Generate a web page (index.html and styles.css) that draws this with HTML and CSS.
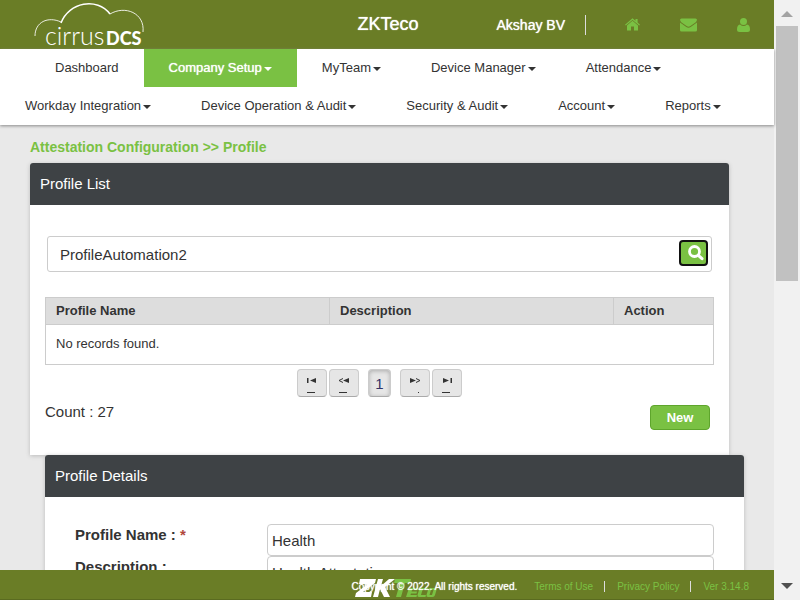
FILE: index.html
```html
<!DOCTYPE html>
<html lang="en">
<head>
<meta charset="utf-8">
<title>Attestation Configuration</title>
<link rel="stylesheet" href="styles.css">
</head>
<body>
<div class="page">
  <header class="top">
    <a class="logo" href="#" aria-label="cirrusDCS">
      <svg width="112" height="49" viewBox="0 0 112 49">
        <g fill="none" stroke="#fff">
          <path d="M1 36C1 22 14 16 27 22" stroke-width="1" opacity=".85"/>
          <path d="M27 23C35 2 63 -3 76 14" stroke-width="1.5"/>
          <path d="M76 14C91 5 111 13 109 32" stroke-width="1" opacity=".85"/>
        </g>
        <text x="11" y="45" class="logo-thin">cirrus</text>
        <text x="72" y="45" class="logo-bold">DCS</text>
      </svg>
    </a>
    <span class="company">ZKTeco</span>
    <span class="user">Akshay BV</span>
    <nav class="icons">
      <a href="#" aria-label="Home"><svg width="15" height="13" viewBox="0 0 15 13"><path d="M7.500 2.800L13 7.400V12.500H9V8.500H6V12.500H2V7.400Z"/><path d="M0 6.700L7.500 .3L10.500 2.800V1H12.600V4.600L15 6.700L14.200 7.500L7.500 1.900L.8 7.500Z"/></svg></a>
      <a href="#" aria-label="Mail"><svg width="17" height="14" viewBox="0 0 17 14"><path d="M1.500 .5H15.500Q17 .5 17 2Q16.500 4 14 5.500L10 8.300Q8.500 9.200 7 8.300L3 5.500Q.5 4 0 2Q0 .5 1.500 .5Z"/><path d="M0 4.500L6.300 9Q8.500 10.500 10.700 9L17 4.500V12Q17 13.500 15.500 13.500H1.500Q0 13.500 0 12Z"/></svg></a>
      <a href="#" aria-label="Account"><svg width="13" height="14" viewBox="0 0 13 14"><circle cx="6.500" cy="3.500" r="3.500"/><path d="M3 6.500Q6.500 9.500 10 6.500Q13 7 13 11.500Q13 14 10.500 14H2.500Q0 14 0 11.500Q0 7 3 6.500Z"/></svg></a>
    </nav>
  </header>
  <nav class="menu">
    <div class="menu-row first">
      <a href="#">Dashboard</a>
      <a href="#" class="active drop">Company Setup</a>
      <a href="#" class="drop">MyTeam</a>
      <a href="#" class="drop">Device Manager</a>
      <a href="#" class="drop">Attendance</a>
    </div>
    <div class="menu-row">
      <a href="#" class="drop">Workday Integration</a>
      <a href="#" class="drop">Device Operation &amp; Audit</a>
      <a href="#" class="drop">Security &amp; Audit</a>
      <a href="#" class="drop">Account</a>
      <a href="#" class="drop">Reports</a>
    </div>
  </nav>
  <main>
    <h1>Attestation Configuration &gt;&gt; Profile</h1>
    <section class="panel">
      <h2>Profile List</h2>
      <div class="list">
        <form class="search">
          <input type="text" aria-label="Search profiles" value="ProfileAutomation2">
          <button type="button" aria-label="Search"><svg width="16" height="16" viewBox="0 0 16 16"><circle cx="6.500" cy="6.500" r="5" fill="none" stroke="#fff" stroke-width="2.800"/><path d="M10.300 10.300L14 13.700" stroke="#fff" stroke-width="3" stroke-linecap="round"/></svg></button>
        </form>
        <table>
          <thead><tr><th class="wide">Profile Name</th><th class="wide">Description</th><th>Action</th></tr></thead>
          <tbody><tr><td colspan="3">No records found.</td></tr></tbody>
        </table>
        <div class="pager">
          <button type="button" aria-label="First page"><svg width="12" height="20" viewBox="0 0 12 20"><path d="M1 4H2.500V9H1ZM10 4V9L4 6.500ZM1 18H9V19H1Z"/></svg></button>
          <button type="button" aria-label="Previous page"><svg width="12" height="20" viewBox="0 0 12 20"><path d="M11 4V9L5 6.500ZM1 18H9V19H1Z"/><path d="M5 4.500L1 6.500L5 8.500" fill="none" stroke="#333"/></svg></button>
          <button type="button" class="current">1</button>
          <button type="button" aria-label="Next page"><svg width="12" height="20" viewBox="0 0 12 20"><path d="M1 4V9L7 6.500ZM9 18H10V19H9Z"/><path d="M7 4.500L11 6.500L7 8.500" fill="none" stroke="#333"/></svg></button>
          <button type="button" aria-label="Last page"><svg width="12" height="20" viewBox="0 0 12 20"><path d="M2 4V9L8 6.500ZM9.500 4H11V9H9.500ZM1 18H9V19H1Z"/></svg></button>
        </div>
        <div class="summary"><span>Count : 27</span><button type="button" class="new">New</button></div>
      </div>
    </section>
    <section class="panel details">
      <h2>Profile Details</h2>
      <form class="fields">
        <label for="name">Profile Name : <span class="required">*</span></label>
        <input id="name" type="text" value="Health">
        <label for="desc">Description :</label>
        <input id="desc" type="text" value="Health Attestation">
      </form>
    </section>
  </main>
  <footer>
    <svg class="brand" width="82" height="20" viewBox="0 0 82 20" aria-label="ZKTeco">
      <path fill="#fff" d="M5 1H21L20 5L8 14H17L16 19H0L1 15L13 6H4ZM23 1H28L26 8L34 1H40L30 9L35 19H29L25 11L23 19H18Z"/>
      <path fill="#7ac143" d="M40 1H56L55 5H50L46 19H41L45 5H39ZM54 10H64L63 12H57L56.500 13.500H62L61.500 15.500H56L55.500 17H62L61.500 19H51ZM66 10H73L72.500 12H67.500L66 17H71L70.500 19H64Q62 19 62.500 17L64 12Q64.500 10 66 10ZM75 10H80Q82 10 81.500 12L80 17Q79.500 19 77.500 19H73Q71 19 71.500 17L73 12Q73.500 10 75 10ZM76 12L74.500 17H77L78.500 12Z"/>
    </svg>
    <span class="copy">Copyright © 2022. All rights reserved.</span>
    <a href="#">Terms of Use</a>
    <a href="#">Privacy Policy</a>
    <a href="#">Ver 3.14.8</a>
  </footer>
</div>
<div class="scrollbar" aria-hidden="true"><i class="up"></i><i class="thumb"></i><i class="down"></i></div>
</body>
</html>
```
FILE: styles.css
```css
* { box-sizing: border-box; }
body {
  margin: 0;
  height: 100vh;
  display: flex;
  overflow: hidden;
  font-family: "Liberation Sans", Arial, sans-serif;
  font-size: 15px;
  color: #333;
  background: #e9e9e9;
}
a { text-decoration: none; }
button, input { font: inherit; color: inherit; margin: 0; }
svg { display: block; }

.page { flex: 1; min-width: 0; display: flex; flex-direction: column; }

.top {
  flex: none;
  height: 49px;
  padding: 0 24px 0 34px;
  display: grid;
  grid-template-columns: 112px 1fr auto auto;
  align-items: center;
  background: #6a7d26;
  color: #fff;
}
.logo-thin { font: 300 25px Lato, sans-serif; fill: #fff; }
.logo-bold { font: 900 18px Lato, sans-serif; fill: #fff; }
.company { font-size: 18px; text-align: right; padding-right: 78px; }
.user { padding-right: 20px; font-size: 14px; text-shadow: 0 0 1px #fff; }
.company { text-shadow: 0 0 1px #fff; }
.icons { display: flex; align-items: center; gap: 40px; padding-left: 39px; height: 20px; border-left: 1px solid #ddd; }
.icons svg { fill: #7ac143; }

.menu { flex: none; background: #fff; box-shadow: 0 1px 3px #888; position: relative; }
.menu-row { display: flex; height: 38px; }
.menu-row.first { padding-left: 30px; }
.menu a {
  display: flex;
  align-items: center;
  padding: 0 25px 2px;
  font-size: 13px;
  color: #333;
  white-space: nowrap;
}
.menu .active { background: #7ac143; color: #fff; text-shadow: 0 0 1px #fff; }
.drop::after {
  content: "";
  margin: 4px 0 0 2px;
  border: 4px solid transparent;
  border-top-color: currentColor;
  border-bottom: 0;
}

main { flex: 1; min-height: 0; overflow: hidden; padding: 13px 30px 0; }
h1 { margin: 0; font-size: 14px; line-height: 18px; color: #7ac143; }
.panel { margin: 7px 15px 0 0; background: #fff; border-radius: 3px 3px 0 0; box-shadow: 0 1px 4px #bbb; }
.panel.details { margin: 0 0 0 15px; position: relative; }
h2 {
  margin: 0;
  padding: 0 10px;
  font-size: 15px;
  font-weight: normal;
  line-height: 42px;
  color: #fff;
  background: #3e4245;
  border-radius: 3px 3px 0 0;
}

.list { padding: 31px 15px 25px; }
.search {
  display: flex;
  align-items: center;
  height: 36px;
  margin: 0 2px 25px;
  padding: 0 3px 2px 12px;
  border: 1px solid #ccc;
  border-radius: 3px;
}
.search input { flex: 1; min-width: 0; border: 0; padding: 2px 0 0; outline: 0; background: none; }
.search button {
  width: 29px;
  height: 26px;
  padding: 0 0 0 7px;
  background: #7ac143;
  border: 2px solid #111;
  border-radius: 4px;
}

table { width: 100%; table-layout: fixed; border-collapse: collapse; font-size: 13px; border: 1px solid #ccc; }
th { height: 27px; padding: 0 10px 2px; text-align: left; background: #ddd; border: 1px solid #ccc; }
.wide { width: 284px; }
td { height: 40px; padding: 0 10px 2px; }

.pager { display: flex; justify-content: center; gap: 2px; padding: 4px 0 0; }
.pager button {
  display: flex;
  align-items: center;
  justify-content: center;
  width: 30px;
  height: 28px;
  padding: 0;
  background: #e6e6e6;
  border: 1px solid #ccc;
  border-bottom-color: #aaa;
  border-radius: 4px;
}
.pager svg { fill: #333; margin-top: 2px; }
.pager .current { width: 23px; margin: 0 7px; box-shadow: inset 0 1px 4px #aaa; color: #336; }

.summary { display: flex; justify-content: space-between; padding: 5px 4px 0 0; line-height: 20px; }
.new {
  width: 60px;
  height: 25px;
  margin-top: 3px;
  padding: 0;
  font-size: 13px;
  font-weight: bold;
  color: #fff;
  background: #7ac143;
  border: 1px solid #5ea52c;
  border-radius: 4px;
}

.fields {
  display: grid;
  grid-template-columns: 192px 1fr;
  grid-auto-rows: 32px;
  padding: 27px 30px;
}
.fields label { font-weight: bold; line-height: 22px; }
.required { color: #b0483c; }
.fields input { height: 32px; width: 100%; padding: 0 4px; border: 1px solid #ccc; border-radius: 4px; background: #fff; }

footer {
  flex: none;
  height: 30px;
  padding: 3px 25px 0 0;
  display: flex;
  align-items: center;
  justify-content: flex-end;
  position: relative;
  background: #6a7d26;
  border-bottom: 1px solid #5a6b20;
  color: #fff;
  font-size: 10px;
}
.brand { position: absolute; right: 337px; top: 8px; }
.copy { position: relative; margin-right: 17px; text-shadow: 0 0 1px #fff; }
footer a { color: #7ac143; line-height: 11px; }
footer a + a { margin-left: 11px; padding-left: 12px; border-left: 1px solid #ddd; }

.scrollbar { flex: none; width: 26px; display: flex; flex-direction: column; align-items: center; background: #f1f1f1; }
.scrollbar .up { margin: 11px 0 9px; border: 6px solid transparent; border-top: 0; border-bottom-color: #a3a3a3; }
.scrollbar .thumb { width: 22px; height: 255px; background: #c1c1c1; }
.scrollbar .down { margin: auto 0 11px; border: 6px solid transparent; border-bottom: 0; border-top-color: #505050; }
```
